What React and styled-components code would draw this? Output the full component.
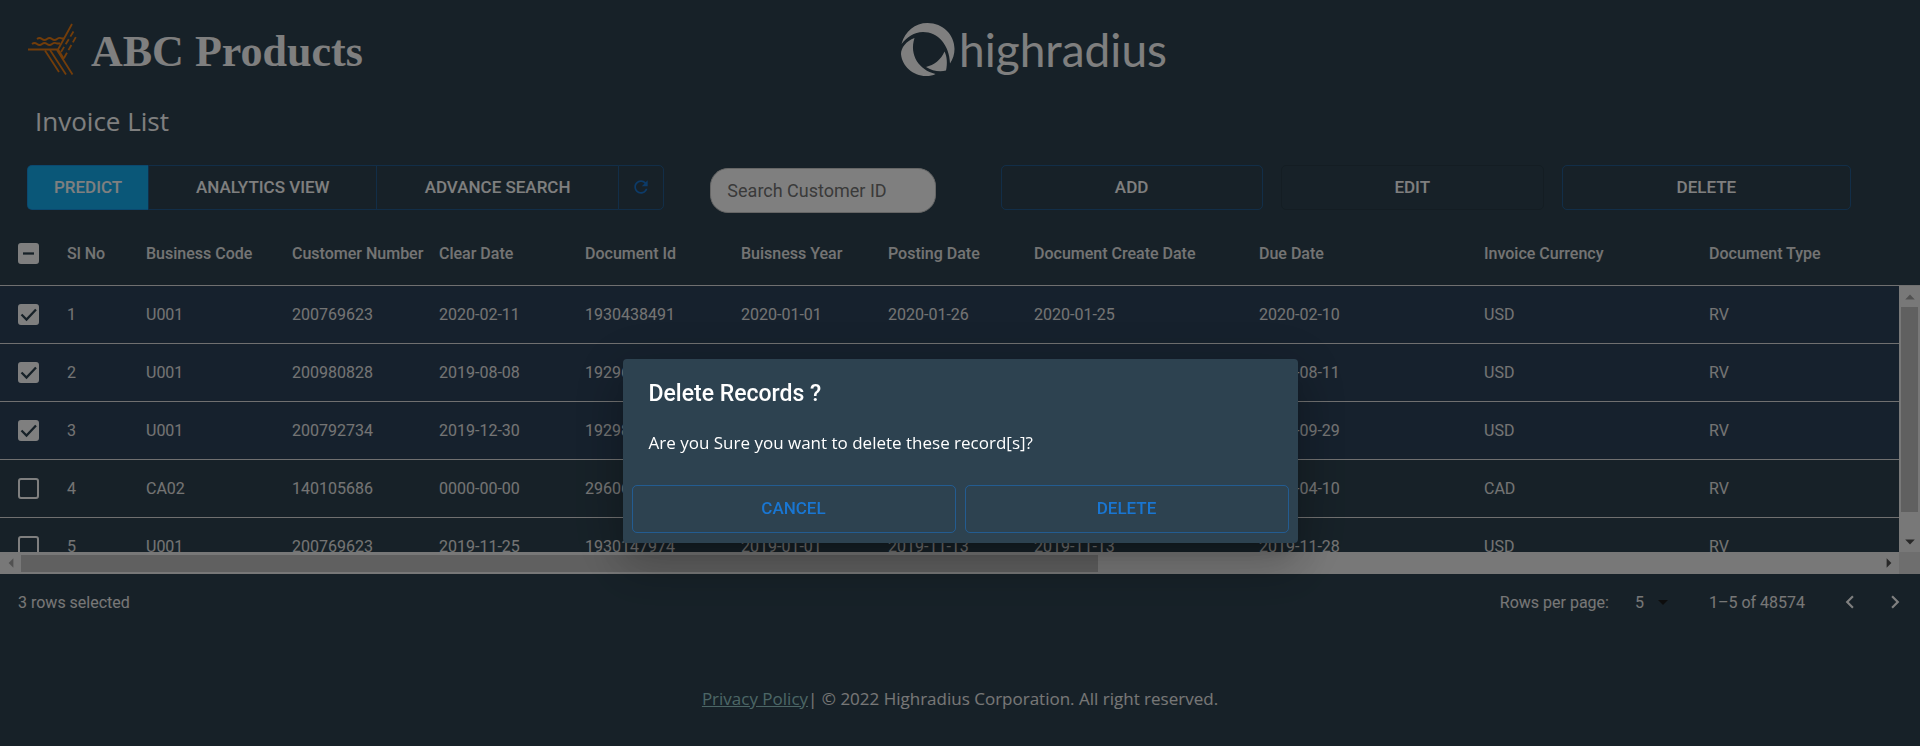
import React from 'react';
import styled, { createGlobalStyle, css } from 'styled-components';

const Global = createGlobalStyle`
  * { box-sizing: border-box; }
  body { margin: 0; background: #2e4350; color: #fff; font-family: Roboto, sans-serif; font-size: 16px; }
  button, input, select { font: inherit; }
`;

const humanist = css`font-family: 'Open Sans', 'Noto Sans', sans-serif;`;
const COLUMNS = '67px 79px 146px 147px 146px 156px 147px 146px 225px 225px 225px 190px';

const Page = styled.div`min-height: 100vh; overflow: hidden;`;

const Header = styled.header`
  display: grid;
  grid-template-columns: 1fr auto 1fr;
  align-items: center;
  height: 98px;
  padding: 0 28px;
`;
const Company = styled.div`display: flex; align-items: center; gap: 12px;`;
const CompanyName = styled.h1`
  margin: 0;
  padding-top: 6px;
  font-family: 'Liberation Serif', serif;
  font-size: 44px;
  line-height: 52px;
`;
const Brand = styled.div`
  display: flex;
  align-items: center;
  gap: 4px;
  padding: 2px 0 0 148px;
`;
const BrandName = styled.span`
  font-family: Lato, sans-serif;
  font-size: 46px;
  line-height: 52px;
`;
const PageTitle = styled.h2`
  ${humanist}
  margin: 0;
  padding: 0 35px;
  font-size: 26px;
  font-weight: 400;
  line-height: 46px;
`;

const Toolbar = styled.div`
  display: grid;
  grid-template-columns: 637fr 300fr 262fr 263fr 289fr;
  column-gap: 18px;
  padding: 21px 69px 0 27px;
`;
const Group = styled.div`display: flex;`;
const Button = styled.button`
  height: ${p => (p.$tall ? 48 : 45)}px;
  width: 100%;
  ${p => p.$grow && `flex: ${p.$grow} 1 0;`}
  padding: 0 0 2px;
  border: 1px solid ${p => (p.disabled ? 'rgba(0,0,0,.12)' : 'rgba(25,118,210,.5)')};
  border-radius: 5px;
  background: ${p => (p.$filled ? '#14aff1' : 'transparent')};
  color: ${p => (p.$blue ? '#1976d2' : '#fff')};
  font-size: 17px;
  font-weight: 500;
  text-transform: uppercase;
  ${Group} > & { border-radius: 0; }
  ${Group} > &:not(:last-child) { border-right: 0; }
  ${Group} > &:first-child { border-radius: 5px 0 0 5px; }
  ${Group} > &:last-child { border-radius: 0 5px 5px 0; }
  svg { display: block; margin: 0 auto; }
`;
const SearchBox = styled.div`padding: 3px 47px 0 28px;`;
const Search = styled.input`
  display: block;
  width: 100%;
  height: 45px;
  padding: 0 16px;
  border: 1px solid #ccc;
  border-radius: 18px;
  background: #fff;
  font-size: 18px;
  &::placeholder { color: #757575; opacity: 1; }
`;

const GridArea = styled.section`display: grid; grid-template-columns: 1fr 21px;`;
const TableClip = styled.div`overflow: hidden; min-width: 0;`;
const Table = styled.table`display: block; width: max-content; min-width: 100%;`;
const Thead = styled.thead`display: block; height: 73px; border-bottom: 1px solid #e0e0e0;`;
const Tbody = styled.tbody`display: block; height: 266px; overflow: hidden;`;
const Row = styled.tr`
  display: grid;
  grid-template-columns: ${COLUMNS};
  align-items: center;
  height: ${p => (p.$head ? 72 : 58)}px;
  ${p => (p.$head ? 'padding-top: 9px;' : 'border-bottom: 1px solid #e0e0e0;')}
  background: ${p => (p.$selected ? '#2c425a' : 'transparent')};
`;
const Cell = styled.td`padding: 0; color: #e8e8e8; white-space: nowrap; line-height: 20px;`;
const HeadCell = styled.th`padding: 0; color: #e8e8e8; text-align: left; font-weight: 500; white-space: nowrap; line-height: 20px;`;

const Check = styled.input`
  appearance: none;
  display: block;
  width: 21px;
  height: 21px;
  margin: 0 0 0 18px;
  border: 2px solid #fff;
  border-radius: 3px;
  background: ${p => (p.$mark ? '#fff' : 'transparent')};
`;
const CheckBox = styled.span`
  display: grid;
  & > * { grid-area: 1 / 1; }
  svg { margin-left: 18px; pointer-events: none; }
`;

const VTrack = styled.div`
  display: flex; flex-direction: column; align-items: center;
  margin-top: 72px; border-top: 1px solid #e0e0e0; background: #f1f1f1;
`;
const VThumb = styled.div`width: 17px; height: 205px; background: #c1c1c1;`;
const HTrack = styled.div`display: flex; align-items: center; height: 22px; background: #f1f1f1;`;
const HThumb = styled.div`height: 17px; width: 56.7%; background: #c1c1c1;`;
const Corner = styled.div`background: #dcdcdc;`;
const Arrow = styled.button`
  display: grid; place-items: center;
  width: 21px; height: 21px; padding: 0; border: 0; background: transparent;
  color: ${p => (p.$off ? '#a3a3a3' : '#505050')};
  ${p => p.$end && 'margin-left: auto;'}
  ${p => p.$bottom && 'margin-top: auto;'}
`;

const TableFooter = styled.div`
  display: flex; align-items: center; height: 56px; padding: 0 10px 0 18px; color: #eee;
`;
const PageSize = styled.label`display: flex; align-items: center; gap: 26px; margin-left: auto;`;
const SelectWrap = styled.span`display: flex; align-items: center; svg { margin-left: -12px; pointer-events: none; }`;
const Select = styled.select`
  appearance: none; width: 28px; padding: 0; border: 0; background: transparent; color: #eee;
`;
const Range = styled.span`margin: 0 30px 0 34px;`;
const Pager = styled.button`
  display: grid; place-items: center;
  width: 30px; height: 30px; margin-left: ${p => (p.$next ? 15 : 0)}px; padding: 0;
  border: 0; background: transparent; color: #fff;
`;

const Footer = styled.footer`
  ${humanist}
  padding-top: 55px;
  text-align: center;
  font-size: 17px;
  line-height: 28px;
  color: #eee;
`;
const Link = styled.a`color: #9cc;`;

const Backdrop = styled.div`
  position: fixed; inset: 0; display: flex; align-items: center; justify-content: center;
  padding-top: 156px; background: rgba(0,0,0,.5);
`;
const Modal = styled.div`
  width: 675px; max-width: 90%;
  border-radius: 4px;
  background: #2d4250;
  box-shadow: 0 12px 17px -8px rgba(0,0,0,.2), 0 27px 43px 3px rgba(0,0,0,.14), 0 10px 52px 9px rgba(0,0,0,.12);
`;
const ModalTitle = styled.h2`margin: 0; padding: 18px 26px; font-size: 23px; font-weight: 500; line-height: 34px;`;
const ModalText = styled.p`${humanist} margin: 0; padding: 0 26px 28px; font-size: 17px; line-height: 28px;`;
const ModalActions = styled.div`display: grid; grid-template-columns: 1fr 1fr; gap: 9px; padding: 0 9px 10px;`;

const CompanyLogo = () => (
  <svg width="51" height="53" viewBox="0 0 51 53" fill="none" stroke="#e67a14" strokeWidth="1.8">
    <path d="M0 26.500H30L44 1" />
    <path d="M4 21q2.500-2 5 0t5 0 5 0 5 0 5-0.500h3M9 16q2.500-2 5 0t5 0 5 0 5 0 5-0.500h2" />
    <path d="M33 29L47 6M36 35L49 12" strokeDasharray="6 3" />
    <path d="M30 26.500L36 36M17 27.500L31 49M22 27L38 51.500M29 27L44.500 51.500" />
  </svg>
);
const BrandLogo = () => (
  <svg width="54" height="54" viewBox="0 0 54 54" fill="#fff">
    <path d="M0.500 21C4 8 14 0 26.500 0 42 0 53.500 12 53.500 26c0 5-1.500 10-4.500 14.500C48.500 22 37 9 22 9 13 9 6 14 0.500 21z" />
    <path d="M13.500 15C5 18 0 25 0 31c1 12 12 22 25 22 4 0 7-.500 9.500-2C18 47 8 32 13.500 15z" />
    <path d="M43.500 28.500c2.500 5 3 12 1.500 19-6 1.500-14 .500-20-3.500 8-2 15-7 18.500-15.500z" />
  </svg>
);
const Tri = ({ d }) => (
  <svg width="12" height="12" viewBox="0 0 10 10" fill="currentColor"><path d={d} /></svg>
);
const CheckMark = ({ kind }) => (
  <svg width="21" height="21" viewBox="0 0 21 21" fill="none" stroke="#2e4350" strokeWidth="2.300">
    <path d={kind === 'mixed' ? 'M5 10.500H16' : 'M3.500 10.500L8.500 15.500L18 5.500'} />
  </svg>
);
const Tick = ({ kind, label }) => (
  <CheckBox>
    <Check type="checkbox" aria-label={label} $mark={!!kind} defaultChecked={kind === 'on'} />
    {kind && <CheckMark kind={kind} />}
  </CheckBox>
);

const HEADINGS = ['Sl No', 'Business Code', 'Customer Number', 'Clear Date', 'Document Id', 'Buisness Year', 'Posting Date', 'Document Create Date', 'Due Date', 'Invoice Currency', 'Document Type'];
const ROWS = [
  ['1', 'U001', '200769623', '2020-02-11', '1930438491', '2020-01-01', '2020-01-26', '2020-01-25', '2020-02-10', 'USD', 'RV'],
  ['2', 'U001', '200980828', '2019-08-08', '1929646410', '2019-01-01', '2019-07-22', '2019-07-22', '2019-08-11', 'USD', 'RV'],
  ['3', 'U001', '200792734', '2019-12-30', '1929873765', '2019-01-01', '2019-09-14', '2019-09-14', '2019-09-29', 'USD', 'RV'],
  ['4', 'CA02', '140105686', '0000-00-00', '2960623488', '2020-01-01', '2020-03-30', '2020-03-30', '2020-04-10', 'CAD', 'RV'],
  ['5', 'U001', '200769623', '2019-11-25', '1930147974', '2019-01-01', '2019-11-13', '2019-11-13', '2019-11-28', 'USD', 'RV'],
];

export default function App() {
  return (
    <>
      <Global />
      <Page>
        <Header>
          <Company><CompanyLogo /><CompanyName>ABC Products</CompanyName></Company>
          <Brand><BrandLogo /><BrandName>highradius</BrandName></Brand>
        </Header>
        <PageTitle>Invoice List</PageTitle>
        <Toolbar>
          <Group>
            <Button $grow={121} $filled>Predict</Button>
            <Button $grow={229}>Analytics View</Button>
            <Button $grow={242}>Advance Search</Button>
            <Button $grow={45} $blue aria-label="Refresh">
              <svg width="20" height="20" viewBox="0 0 24 24" fill="currentColor">
                <path d="M17.650 6.350C16.200 4.900 14.210 4 12 4c-4.420 0-7.990 3.580-7.990 8s3.570 8 7.990 8c3.730 0 6.840-2.550 7.730-6h-2.080c-.820 2.330-3.040 4-5.650 4-3.310 0-6-2.690-6-6s2.690-6 6-6c1.660 0 3.140.690 4.220 1.780L13 11h7V4l-2.350 2.350z" />
              </svg>
            </Button>
          </Group>
          <SearchBox><Search aria-label="Search Customer ID" placeholder="Search Customer ID" /></SearchBox>
          <Button>Add</Button>
          <Button disabled>Edit</Button>
          <Button>Delete</Button>
        </Toolbar>
        <GridArea>
          <TableClip>
            <Table>
              <Thead>
                <Row $head>
                  <HeadCell><Tick kind="mixed" label="Select all rows" /></HeadCell>
                  {HEADINGS.map(h => <HeadCell key={h}>{h}</HeadCell>)}
                </Row>
              </Thead>
              <Tbody>
                {ROWS.map((r, i) => (
                  <Row key={r[0]} $selected={i < 3}>
                    <Cell><Tick kind={i < 3 ? 'on' : undefined} label={`Select row ${r[0]}`} /></Cell>
                    {r.map((v, j) => <Cell key={j}>{v}</Cell>)}
                  </Row>
                ))}
              </Tbody>
            </Table>
          </TableClip>
          <VTrack>
            <Arrow $off aria-label="Scroll up"><Tri d="M1 7L5 3L9 7z" /></Arrow>
            <VThumb />
            <Arrow $bottom aria-label="Scroll down"><Tri d="M1 3L5 7L9 3z" /></Arrow>
          </VTrack>
          <HTrack>
            <Arrow $off aria-label="Scroll left"><Tri d="M7 1L3 5L7 9z" /></Arrow>
            <HThumb />
            <Arrow $end aria-label="Scroll right"><Tri d="M3 1L7 5L3 9z" /></Arrow>
          </HTrack>
          <Corner />
        </GridArea>
        <TableFooter>
          <span>3 rows selected</span>
          <PageSize>
            Rows per page:
            <SelectWrap>
              <Select defaultValue="5"><option>5</option><option>10</option></Select>
              <svg width="24" height="24" viewBox="0 0 24 24" fill="#1a1a1a"><path d="M7 10l5 5 5-5z" /></svg>
            </SelectWrap>
          </PageSize>
          <Range>1–5 of 48574</Range>
          <Pager aria-label="Previous page"><svg width="26" height="26" viewBox="0 0 24 24" fill="currentColor"><path d="M15.410 7.410L14 6l-6 6 6 6 1.410-1.410L10.830 12z" /></svg></Pager>
          <Pager $next aria-label="Next page"><svg width="26" height="26" viewBox="0 0 24 24" fill="currentColor"><path d="M10 6L8.590 7.410 13.170 12l-4.580 4.590L10 18l6-6z" /></svg></Pager>
        </TableFooter>
        <Footer><Link href="#privacy">Privacy Policy</Link>| © 2022 Highradius Corporation. All right reserved.</Footer>
      </Page>
      <Backdrop>
        <Modal role="dialog" aria-modal="true" aria-labelledby="delete-title">
          <ModalTitle id="delete-title">Delete Records ?</ModalTitle>
          <ModalText>Are you Sure you want to delete these record[s]?</ModalText>
          <ModalActions>
            <Button $tall $blue>Cancel</Button>
            <Button $tall $blue>Delete</Button>
          </ModalActions>
        </Modal>
      </Backdrop>
    </>
  );
}
